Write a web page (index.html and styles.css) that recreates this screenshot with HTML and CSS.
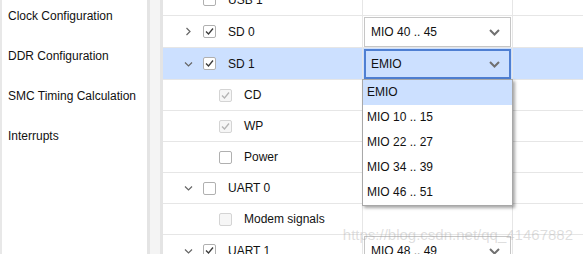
FILE: index.html
```html
<!DOCTYPE html>
<html lang="en">
<head>
    <meta charset="UTF-8">
    <title>Peripheral I/O Pins</title>
    <link rel="stylesheet" href="styles.css">
</head>
<body>
    <div class="app">
        <nav class="side">
            <div class="side-item">Clock Configuration</div>
            <div class="side-item">DDR Configuration</div>
            <div class="side-item">SMC Timing Calculation</div>
            <div class="side-item">Interrupts</div>
        </nav>
        <div class="splitter"></div>
        <div class="tree">
            <div class="row tall">
                <div class="name"><span class="exp"></span><span class="check"></span><span class="label">USB 1</span></div>
                <div class="value"></div>
                <div class="rest"></div>
            </div>
            <div class="row tall">
                <div class="name">
                    <span class="exp"><svg width="6" height="9" viewBox="0 0 6 9"><path d="M1.5 1 L5 4.5 L1.5 8" fill="none" stroke="#666" stroke-width="1.2"/></svg></span>
                    <span class="check"><svg width="11" height="11" viewBox="0 0 11 11"><path d="M2 5.5 L4.5 8 L9 2.5" fill="none" stroke="#3a3a3a" stroke-width="1.3"/></svg></span>
                    <span class="label">SD 0</span>
                </div>
                <div class="value">
                    <div class="select">MIO 40 .. 45<svg class="caret" width="11" height="7" viewBox="0 0 11 7"><path d="M1 1 L5.5 5.5 L10 1" fill="none" stroke="#707070" stroke-width="2"/></svg></div>
                </div>
                <div class="rest"></div>
            </div>
            <div class="row tall selected">
                <div class="name">
                    <span class="exp"><svg width="9" height="6" viewBox="0 0 9 6"><path d="M1 1.5 L4.5 5 L8 1.5" fill="none" stroke="#666" stroke-width="1.2"/></svg></span>
                    <span class="check"><svg width="11" height="11" viewBox="0 0 11 11"><path d="M2 5.5 L4.5 8 L9 2.5" fill="none" stroke="#3a3a3a" stroke-width="1.3"/></svg></span>
                    <span class="label">SD 1</span>
                </div>
                <div class="value">
                    <div class="select active">EMIO<svg class="caret" width="11" height="7" viewBox="0 0 11 7"><path d="M1 1 L5.5 5.5 L10 1" fill="none" stroke="#707070" stroke-width="2"/></svg></div>
                    <div class="menu">
                        <div class="option current">EMIO</div>
                        <div class="option">MIO 10 .. 15</div>
                        <div class="option">MIO 22 .. 27</div>
                        <div class="option">MIO 34 .. 39</div>
                        <div class="option">MIO 46 .. 51</div>
                    </div>
                </div>
                <div class="rest"></div>
            </div>
            <div class="row">
                <div class="name child">
                    <span class="check disabled"><svg width="11" height="11" viewBox="0 0 11 11"><path d="M2 5.5 L4.5 8 L9 2.5" fill="none" stroke="#b4b4b4" stroke-width="1.3"/></svg></span>
                    <span class="label">CD</span>
                </div>
                <div class="value"></div>
                <div class="rest"></div>
            </div>
            <div class="row">
                <div class="name child">
                    <span class="check disabled"><svg width="11" height="11" viewBox="0 0 11 11"><path d="M2 5.5 L4.5 8 L9 2.5" fill="none" stroke="#b4b4b4" stroke-width="1.3"/></svg></span>
                    <span class="label">WP</span>
                </div>
                <div class="value"></div>
                <div class="rest"></div>
            </div>
            <div class="row">
                <div class="name child">
                    <span class="check"></span>
                    <span class="label">Power</span>
                </div>
                <div class="value"></div>
                <div class="rest"></div>
            </div>
            <div class="row">
                <div class="name">
                    <span class="exp"><svg width="9" height="6" viewBox="0 0 9 6"><path d="M1 1.5 L4.5 5 L8 1.5" fill="none" stroke="#666" stroke-width="1.2"/></svg></span>
                    <span class="check"></span>
                    <span class="label">UART 0</span>
                </div>
                <div class="value"></div>
                <div class="rest"></div>
            </div>
            <div class="row">
                <div class="name child">
                    <span class="check disabled"></span>
                    <span class="label">Modem signals</span>
                </div>
                <div class="value"></div>
                <div class="rest"></div>
            </div>
            <div class="row tall">
                <div class="name">
                    <span class="exp"><svg width="9" height="6" viewBox="0 0 9 6"><path d="M1 1.5 L4.5 5 L8 1.5" fill="none" stroke="#666" stroke-width="1.2"/></svg></span>
                    <span class="check"><svg width="11" height="11" viewBox="0 0 11 11"><path d="M2 5.5 L4.5 8 L9 2.5" fill="none" stroke="#3a3a3a" stroke-width="1.3"/></svg></span>
                    <span class="label">UART 1</span>
                </div>
                <div class="value">
                    <div class="select">MIO 48 .. 49<svg class="caret" width="11" height="7" viewBox="0 0 11 7"><path d="M1 1 L5.5 5.5 L10 1" fill="none" stroke="#707070" stroke-width="2"/></svg></div>
                </div>
                <div class="rest"></div>
            </div>
        </div>
    </div>
    <div class="watermark">https://blog.csdn.net/qq_41467882</div>
</body>
</html>
```

FILE: styles.css
```css
body {
    margin: 0;
    font-family: "Liberation Sans", Arial, sans-serif;
    font-size: 12px;
    color: #111;
    background-color: #fff;
    overflow: hidden;
}
.app {
    display: flex;
    height: 254px;
    overflow: hidden;
}
.side {
    width: 145px;
    border-left: 2px solid #e8e8e8;
    padding-top: 6px;
}
.side-item {
    line-height: 20px;
    margin-bottom: 20px;
    padding-left: 6px;
    white-space: nowrap;
}
.splitter {
    width: 10px;
    border-left: 3px solid #e4e4e4;
    border-right: 3px solid #e4e4e4;
    background-color: #f4f4f4;
}
.tree {
    flex: 1;
    margin-top: -16px;
}
.row {
    display: flex;
    height: 30px;
    border-bottom: 1px solid #e6e6e6;
}
.row.tall {
    height: 31px;
}
.row.selected {
    background-color: #cce0ff;
}
.name {
    width: 199px;
    border-right: 1px solid #e6e6e6;
    display: flex;
    align-items: center;
    padding-left: 18px;
    box-sizing: border-box;
    width: 200px;
}
.name.child {
    padding-left: 56px;
}
.exp {
    width: 14px;
    margin-right: 8px;
    display: flex;
    justify-content: center;
    align-items: center;
}
.check {
    width: 13px;
    height: 13px;
    box-sizing: border-box;
    border: 1px solid #b0b0b0;
    border-radius: 2px;
    background-color: #fff;
    margin-right: 12px;
    display: flex;
    justify-content: center;
    align-items: center;
}
.check.disabled {
    border-color: #d4d4d4;
    background-color: #f6f6f6;
}
.value {
    width: 150px;
    box-sizing: border-box;
    border-right: 1px solid #e6e6e6;
    position: relative;
}
.rest {
    flex: 1;
}
.select {
    margin: 1px 1px 0 1px;
    height: 30px;
    box-sizing: border-box;
    border: 1px solid #c6c6c6;
    background-color: #fff;
    display: flex;
    align-items: center;
    justify-content: space-between;
    padding: 0 10px 0 6px;
}
.select.active {
    background-color: #cce0ff;
    border: 2px solid #4f7fd2;
    padding-left: 5px;
    padding-right: 9px;
}
.menu {
    position: absolute;
    top: 100%;
    left: -1px;
    width: 151px;
    box-sizing: border-box;
    background-color: #fff;
    border: 1px solid #a8a8a8;
    box-shadow: 2px 2px 3px rgba(0, 0, 0, 0.35);
    z-index: 2;
}
.option {
    height: 25px;
    line-height: 25px;
    padding-left: 4px;
}
.option.current {
    background-color: #cce0ff;
}
.watermark {
    position: absolute;
    top: 226px;
    right: 10px;
    font-size: 15px;
    color: rgba(160, 160, 160, 0.35);
    white-space: nowrap;
}
```
